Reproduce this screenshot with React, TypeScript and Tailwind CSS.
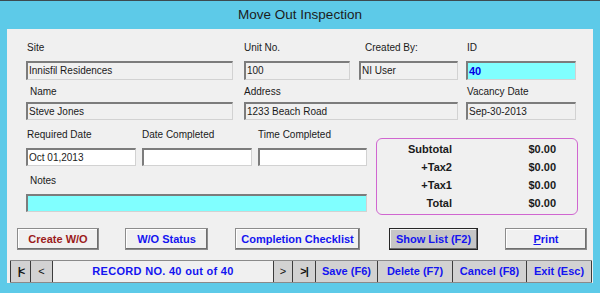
import React from "react";

function Field({ w, text, bg, bold }: { w: string; text?: string; bg: string; bold?: boolean }) {
  return (
    <div
      className={`${w} ${bg} h-full border-t-2 border-l-2 border-t-[#7c7c7c] border-l-[#7c7c7c] border-r border-b border-r-[#d2d2d2] border-b-[#d2d2d2] flex items-center pl-[1px] overflow-hidden whitespace-nowrap ${
        bold ? "text-[11px] font-bold text-[#0000e6]" : "text-[10px] text-[#1a1a1a]"
      } leading-none`}
    >
      {text}
    </div>
  );
}

function Label({ text, pad }: { text: string; pad: string }) {
  return <div className={`h-[12px] leading-[12px] text-[10px] text-[#1a1a1a] whitespace-nowrap ${pad}`}>{text}</div>;
}

const raised =
  "h-full bg-[#f0f0f0] border border-[#8c8c8c] shadow-[inset_-1px_-1px_0_#6e6e6e,inset_1px_1px_0_#ffffff] flex items-center justify-center text-[11px] font-bold whitespace-nowrap";

const navBtn =
  "h-full bg-[#d2d2d2] border-r border-[#3c3c3c] flex items-center justify-center text-[11px] font-bold whitespace-nowrap";

export default function App() {
  return (
    <div className="w-[600px] h-[293px] bg-[#5dcae8] border-t border-t-[#3c4a50] flex flex-col font-['Liberation_Sans',Arial,sans-serif] overflow-hidden">
      <div className="h-[28px] flex items-center justify-center text-[13.5px] text-[#1c1c1c] pt-[1px]">
        Move Out Inspection
      </div>
      <div className="mx-[7px] h-[254px] bg-[#f0f0f0] flex flex-col pt-[13px]">
        {/* Row 1 */}
        <div className="flex">
          <div className="ml-[19px] w-[207px] flex flex-col">
            <Label text="Site" pad="pl-[1px]" />
            <div className="mt-[7px] h-[19px] flex">
              <Field w="w-[207px]" bg="bg-[#f0f0f0]" text="Innisfil Residences" />
            </div>
          </div>
          <div className="ml-[11px] w-[106px] flex flex-col">
            <Label text="Unit No." pad="pl-0" />
            <div className="mt-[7px] h-[19px] flex">
              <Field w="w-[106px]" bg="bg-[#f0f0f0]" text="100" />
            </div>
          </div>
          <div className="ml-[9px] w-[99px] flex flex-col">
            <Label text="Created By:" pad="pl-[6px]" />
            <div className="mt-[7px] h-[19px] flex">
              <Field w="w-[99px]" bg="bg-[#f0f0f0]" text="NI User" />
            </div>
          </div>
          <div className="ml-[8px] w-[110px] flex flex-col">
            <Label text="ID" pad="pl-[1px]" />
            <div className="mt-[7px] h-[19px] flex">
              <Field w="w-[110px]" bg="bg-[#80ffff]" text="40" bold />
            </div>
          </div>
        </div>
        {/* Row 2 */}
        <div className="flex mt-[6px]">
          <div className="ml-[19px] w-[207px] flex flex-col">
            <Label text="Name" pad="pl-[4px]" />
            <div className="mt-[4px] h-[18px] flex">
              <Field w="w-[207px]" bg="bg-[#f0f0f0]" text="Steve Jones" />
            </div>
          </div>
          <div className="ml-[11px] w-[214px] flex flex-col">
            <Label text="Address" pad="pl-0" />
            <div className="mt-[4px] h-[18px] flex">
              <Field w="w-[214px]" bg="bg-[#f0f0f0]" text="1233 Beach Road" />
            </div>
          </div>
          <div className="ml-[8px] w-[110px] flex flex-col">
            <Label text="Vacancy Date" pad="pl-[1px]" />
            <div className="mt-[4px] h-[18px] flex">
              <Field w="w-[110px]" bg="bg-[#f0f0f0]" text="Sep-30-2013" />
            </div>
          </div>
        </div>
        {/* Row 3 + totals */}
        <div className="flex items-start">
          <div className="ml-[19px] w-[341px] flex flex-col pt-[9px]">
            <div className="flex">
              <div className="w-[110px] flex flex-col">
                <Label text="Required Date" pad="pl-[1px]" />
                <div className="mt-[7px] h-[18px] flex">
                  <Field w="w-[110px]" bg="bg-white" text="Oct 01,2013" />
                </div>
              </div>
              <div className="ml-[6px] w-[110px] flex flex-col">
                <Label text="Date Completed" pad="pl-0" />
                <div className="mt-[7px] h-[18px] flex">
                  <Field w="w-[110px]" bg="bg-white" />
                </div>
              </div>
              <div className="ml-[6px] w-[109px] flex flex-col">
                <Label text="Time Completed" pad="pl-0" />
                <div className="mt-[7px] h-[18px] flex">
                  <Field w="w-[109px]" bg="bg-white" />
                </div>
              </div>
            </div>
            <div className="mt-[9px]">
              <Label text="Notes" pad="pl-[4px]" />
            </div>
            <div className="mt-[7px] h-[18px] flex">
              <Field w="w-[341px]" bg="bg-[#80ffff]" text="" />
            </div>
          </div>
          <div className="ml-[9px] mt-[18px] w-[202px] h-[77px] border border-[#d066d0] rounded-[6px] pt-[1px] grid grid-cols-[75px_104px] auto-rows-[18px] text-[11px] font-bold text-[#1a1a1a]">
            <div className="text-right self-center">Subtotal</div>
            <div className="text-right self-center">$0.00</div>
            <div className="text-right self-center">+Tax2</div>
            <div className="text-right self-center">$0.00</div>
            <div className="text-right self-center">+Tax1</div>
            <div className="text-right self-center">$0.00</div>
            <div className="text-right self-center">Total</div>
            <div className="text-right self-center">$0.00</div>
          </div>
        </div>
        {/* Buttons */}
        <div className="flex mt-[13px] h-[22px]">
          <div className={`ml-[10px] w-[82px] ${raised} text-[#9b1b1b]`}>Create W/O</div>
          <div className={`ml-[26px] w-[83px] ${raised} text-[#1414f0]`}>W/O Status</div>
          <div className={`ml-[27px] w-[125px] ${raised} text-[#1414f0]`}>Completion Checklist</div>
          <div className="ml-[29px] w-[89px] h-full bg-[#c6c6c6] border border-[#262626] shadow-[inset_-1px_-1px_0_#6a6a6a,inset_1px_1px_0_#f4f4f4] flex items-center justify-center text-[11px] font-bold text-[#1414f0] whitespace-nowrap">
            Show List (F2)
          </div>
          <div className={`ml-[27px] w-[82px] ${raised} text-[#1414f0]`}>
            <span className="underline">P</span>rint
          </div>
        </div>
        {/* Nav */}
        <div className="flex mt-[10px] h-[23px] ml-[3px] w-[582px] border-t border-b border-[#8a8a8a]">
          <div className={`w-[21px] ${navBtn} border-l text-[#111] tracking-[-2px]`}>|&lt;</div>
          <div className={`w-[22px] ${navBtn} text-[#111] font-normal`}>&lt;</div>
          <div className="w-[220px] h-full bg-[#f0f0f0] flex items-center justify-center text-[11px] font-bold text-[#1414f0] tracking-[0.3px] whitespace-nowrap">
            RECORD NO. 40 out of 40
          </div>
          <div className={`w-[20px] ${navBtn} border-l text-[#111] font-normal`}>&gt;</div>
          <div className={`w-[23px] ${navBtn} text-[#111] tracking-[-1px]`}>&gt;|</div>
          <div className={`w-[62px] ${navBtn} text-[#1414f0]`}>Save (F6)</div>
          <div className={`w-[75px] ${navBtn} text-[#1414f0]`}>Delete (F7)</div>
          <div className={`w-[74px] ${navBtn} text-[#1414f0]`}>Cancel (F8)</div>
          <div className={`w-[65px] ${navBtn} text-[#1414f0]`}>Exit (Esc)</div>
        </div>
      </div>
      <div className="flex-1" />
    </div>
  );
}
